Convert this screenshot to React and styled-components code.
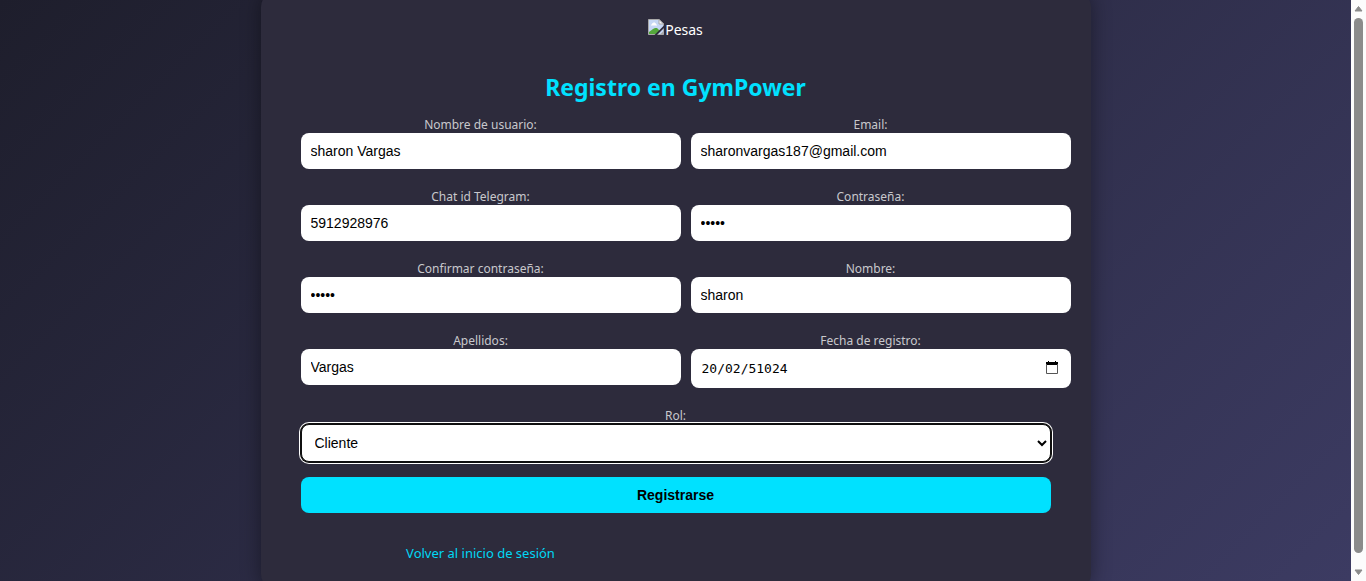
import React from "react";
import styled, { createGlobalStyle } from "styled-components";

const uiFont = `"Noto Sans", "Segoe UI", sans-serif`;
const fieldFont = `"Liberation Sans", Arial, sans-serif`;

const GlobalStyle = createGlobalStyle`
  * { box-sizing: border-box; }
  body {
    margin: 0;
    overflow: hidden;
    font-family: ${uiFont};
    color: #fff;
  }
`;

const Shell = styled.div`
  display: flex;
  height: 100vh;
`;

const Page = styled.main`
  flex: 1;
  min-width: 0;
  display: flex;
  align-items: center;
  justify-content: center;
  background: linear-gradient(135deg, #1e1e2c, #3c3b62);
  overflow: hidden;
`;

const Card = styled.section`
  flex: 0 1 830px;
  padding: 26px 40px;
  border-radius: 15px;
  background: #2d2b3c;
  box-shadow: 0 0 20px rgba(0, 0, 0, 0.4);
  text-align: center;
`;

const Logo = styled.div`
  display: flex;
  justify-content: center;
  align-items: flex-start;
  gap: 1px;
  font-size: 14px;
  line-height: 24px;
`;

const Title = styled.h2`
  margin: 29px 0 14px;
  color: #00e1ff;
  font-size: 23px;
  line-height: 32px;
`;

const Form = styled.form`
  display: grid;
  grid-template-columns: 1fr 1fr;
  column-gap: 30px;
  row-gap: 20px;
`;

const Field = styled.div`
  display: flex;
  flex-direction: column;
  grid-column: ${(p) => (p.$wide ? "1 / -1" : "auto")};
`;

const Label = styled.label`
  color: #c8c8cc;
  font-size: 12px;
  line-height: 16px;
`;

const Input = styled.input`
  box-sizing: content-box;
  width: 100%;
  height: 16px;
  padding: 10px;
  border: 0;
  border-radius: 8px;
  background: #fff;
  color: #000;
  font-family: ${fieldFont};
  font-size: 14px;
`;

const DateBox = styled.div`
  box-sizing: content-box;
  display: flex;
  align-items: center;
  width: 100%;
  height: 19px;
  padding: 10px;
  border-radius: 8px;
  background: #fff;
`;

const DateInput = styled.input`
  flex: 1;
  min-width: 0;
  padding: 0 1px;
  border: 0;
  background: transparent;
  color: #000;
  font-family: "DejaVu Sans Mono", monospace;
  font-size: 13px;
`;

const PickerButton = styled.button`
  display: flex;
  padding: 0 3px 2px;
  border: 0;
  background: none;
`;

const Select = styled.select`
  width: 100%;
  height: 38px;
  padding: 0 9px;
  border: 1px solid #101010;
  border-radius: 8px;
  box-shadow: 0 0 0 1px #101010, 0 0 0 2px #fff;
  background: #fff;
  color: #000;
  font-family: ${fieldFont};
  font-size: 14px;
`;

const Submit = styled.button`
  width: 100%;
  height: 36px;
  margin-top: 15px;
  border: 0;
  border-radius: 8px;
  background: #00e1ff;
  color: #000;
  font-family: ${fieldFont};
  font-size: 14px;
  font-weight: bold;
`;

const Footer = styled.footer`
  display: grid;
  grid-template-columns: 1fr 1fr;
  column-gap: 30px;
  margin-top: 30px;
`;

const BackLink = styled.a`
  color: #00d8f5;
  font-size: 13px;
  line-height: 20px;
  text-decoration: none;
`;

const ScrollTrack = styled.div`
  flex: 0 0 15px;
  display: flex;
  flex-direction: column;
  align-items: center;
  padding: 4px 0;
  background: #fcfcfc;
`;

const ScrollThumb = styled.div`
  flex: 1;
  width: 9px;
  margin: 4px 0 14px;
  border-radius: 5px;
  background: #8b8b8b;
`;

const BrokenImage = () => (
  <svg width="16" height="18" viewBox="0 -1 16 18" aria-hidden="true">
    <path d="M0.5 0.5H11L15.5 5V15.5H0.5Z" fill="#c6d7f5" stroke="#a9a9a9" />
    <path d="M3 6.5V5.4H4V4.2H5.2V3.4H7V4.2H8V5.4H9V6.5Z" fill="#fff" />
    <path d="M1 15V13L5 10L7 9H9L12 12L9 15Z" fill="#54a83c" />
    <path d="M11 0.5V5H15.5Z" fill="#f7f7f7" stroke="#a9a9a9" />
    <path d="M16 6.5V9L9 16H6.5Z" fill="#2d2b3c" />
    <path d="M12 15.5H15.5V12Z" fill="#a9a9a9" />
  </svg>
);

const CalendarIcon = () => (
  <svg width="12" height="13" viewBox="0 0 12 13" aria-hidden="true">
    <path d="M2 0H3V1H9V0H10V1H12V4H0V1H2Z" fill="#000" />
    <path d="M0.5 3V12.5H11.5V3" fill="none" stroke="#555" />
  </svg>
);

const Arrow = ({ down }) => (
  <svg width="9" height="10" viewBox="0 0 9 10" aria-hidden="true">
    <path
      d={down ? "M1 3H8L4.5 7.5Z" : "M1 7H8L4.5 2.5Z"}
      fill="#8b8b8b"
      stroke="#8b8b8b"
      strokeLinejoin="round"
    />
  </svg>
);

const fields = [
  { id: "username", label: "Nombre de usuario:", type: "text", value: "sharon Vargas" },
  { id: "email", label: "Email:", type: "email", value: "sharonvargas187@gmail.com" },
  { id: "chat", label: "Chat id Telegram:", type: "text", value: "5912928976" },
  { id: "password", label: "Contraseña:", type: "password", value: "12345" },
  { id: "confirm", label: "Confirmar contraseña:", type: "password", value: "12345" },
  { id: "name", label: "Nombre:", type: "text", value: "sharon" },
  { id: "surname", label: "Apellidos:", type: "text", value: "Vargas" },
];

export default function App() {
  return (
    <Shell>
      <GlobalStyle />
      <Page>
        <Card>
          <Logo>
            <BrokenImage />
            <span>Pesas</span>
          </Logo>
          <Title>Registro en GymPower</Title>
          <Form id="register" onSubmit={(e) => e.preventDefault()}>
            {fields.map((f) => (
              <Field key={f.id}>
                <Label htmlFor={f.id}>{f.label}</Label>
                <Input id={f.id} type={f.type} defaultValue={f.value} />
              </Field>
            ))}
            <Field>
              <Label htmlFor="date">Fecha de registro:</Label>
              <DateBox>
                <DateInput id="date" type="text" defaultValue="20/02/51024" />
                <PickerButton type="button" aria-label="Elegir fecha">
                  <CalendarIcon />
                </PickerButton>
              </DateBox>
            </Field>
            <Field $wide>
              <Label htmlFor="role">Rol:</Label>
              <Select id="role" defaultValue="Cliente">
                <option>Cliente</option>
              </Select>
            </Field>
          </Form>
          <Submit type="submit" form="register">Registrarse</Submit>
          <Footer>
            <BackLink href="#login">Volver al inicio de sesión</BackLink>
          </Footer>
        </Card>
      </Page>
      <ScrollTrack aria-hidden="true">
        <Arrow />
        <ScrollThumb />
        <Arrow down />
      </ScrollTrack>
    </Shell>
  );
}
